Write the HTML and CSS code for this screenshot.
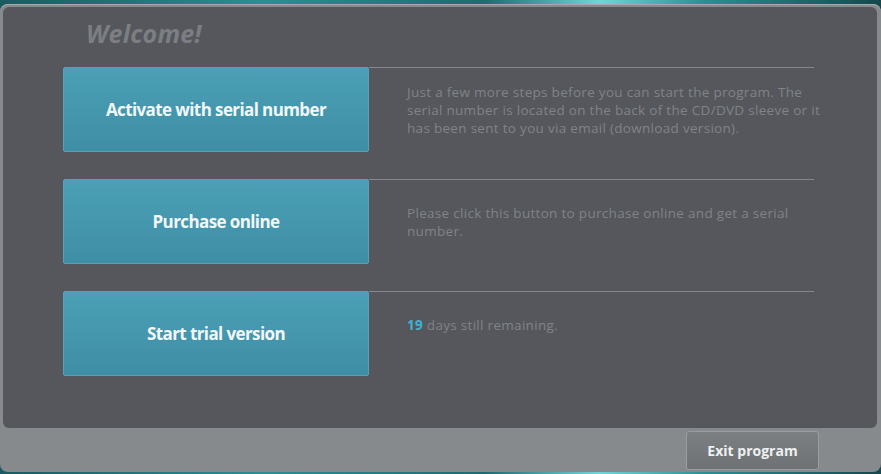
FILE: index.html
```html
<!DOCTYPE html>
<html lang="en">
<head>
  <meta charset="UTF-8">
  <title>Welcome</title>
  <link rel="stylesheet" href="styles.css">
</head>
<body>

  <div class="window">
    <div class="panel">
      <h1 class="title">Welcome!</h1>

      <div class="row">
        <button class="action">Activate with serial number</button>
        <div class="info">
          <p class="desc">Just a few more steps before you can start the program. The<br>serial number is located on the back of the CD/DVD sleeve or it<br>has been sent to you via email (download version).</p>
        </div>
      </div>

      <div class="row">
        <button class="action">Purchase online</button>
        <div class="info">
          <p class="desc">Please click this button to purchase online and get a serial<br>number.</p>
        </div>
      </div>

      <div class="row">
        <button class="action">Start trial version</button>
        <div class="info">
          <p class="desc"><span class="days">19</span> days still remaining.</p>
        </div>
      </div>
    </div>

    <div class="footer">
      <button class="exit">Exit program</button>
    </div>
  </div>

</body>
</html>
```

FILE: styles.css
```css
html, body {
  margin: 0;
  height: 100%;
}

body {
  background: linear-gradient(90deg, #1b5a60 0%, #2a8f93 30%, #1d6b70 55%, #6fd6d8 68%, #2a8f93 80%, #15484d 100%);
  font-family: 'Open Sans', sans-serif;
  padding-top: 4px;
  box-sizing: border-box;
  overflow: hidden;
}

.window {
  height: 468px;
  background: #878a8d;
  border-radius: 8px;
  padding: 3px 4px 0 3px;
  box-sizing: border-box;
  display: flex;
  flex-direction: column;
  box-shadow: inset 0 1px 0 #a7aaad;
}

.panel {
  height: 421px;
  flex: none;
  background: #55575c;
  border-radius: 6px;
  padding: 8px 0 0 60px;
  box-sizing: border-box;
}

.title {
  margin: 0 0 16px 23px;
  font-size: 25px;
  line-height: 36px;
  font-style: italic;
  font-weight: 700;
  color: #7b7e83;
  letter-spacing: 0.2px;
}

.row {
  display: flex;
  height: 85px;
  margin-bottom: 27px;
}

.action {
  width: 306px;
  height: 85px;
  flex: none;
  border: 1px solid #4fa6bb;
  border-radius: 2px;
  background: linear-gradient(#4aa0b6, #3f8ea5);
  color: #f2f7f8;
  font-family: 'Open Sans', sans-serif;
  font-size: 17px;
  font-weight: 700;
  letter-spacing: -0.6px;
  cursor: pointer;
}

.info {
  flex: none;
  width: 445px;
  border-top: 1px solid #85878b;
  display: flex;
  align-items: center;
}

.desc {
  flex: none;
  margin: 0 0 0 38px;
  min-height: 36px;
  font-size: 13.5px;
  line-height: 18px;
  letter-spacing: 0.3px;
  color: #808388;
  width: 442px;
}

.days {
  color: #3cb3d3;
  font-weight: 700;
}

.footer {
  flex: 1;
  display: flex;
  justify-content: flex-end;
  align-items: center;
  padding-right: 58px;
}

.exit {
  width: 133px;
  height: 39px;
  margin-top: 1px;
  border: 1px solid #9a9da0;
  border-radius: 3px;
  background: linear-gradient(#7c7f82, #6f7275);
  color: #eef0f1;
  font-family: 'Open Sans', sans-serif;
  font-size: 14px;
  font-weight: 700;
  cursor: pointer;
}
```
